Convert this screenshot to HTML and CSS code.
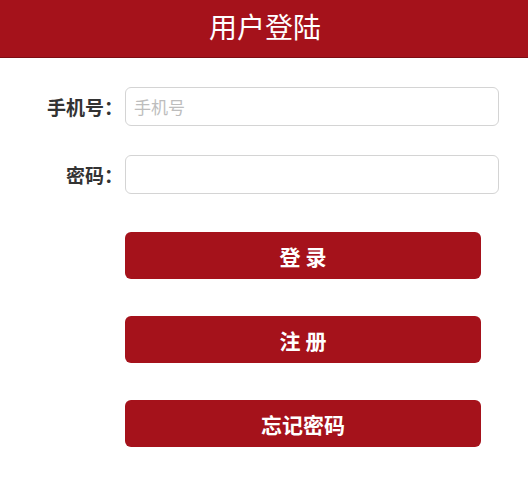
FILE: index.html
```html
<!DOCTYPE html>
<html lang="zh">
<head>
    <meta charset="UTF-8">
    <meta name="viewport" content="width=device-width, initial-scale=1.0">
    <title>用户登陆</title>
    <link rel="stylesheet" href="styles.css">
</head>
<body>
    <div class="header">用户登陆</div>
    <div class="container">
        <div class="form-row">
            <label for="phone" class="form-label">手机号：</label>
            <input type="text" class="form-control" id="phone" placeholder="手机号">
        </div>
        <div class="form-row">
            <label for="password" class="form-label">密码：</label>
            <input type="password" class="form-control" id="password">
        </div>
        <div class="btn-list">
            <button class="btn">登 录</button>
            <button class="btn">注 册</button>
            <button class="btn">忘记密码</button>
        </div>
    </div>
</body>
</html>
```

FILE: styles.css
```css
body {
    font-family: "Noto Sans CJK SC", "Noto Sans", sans-serif;
    background-color: #fff;
    margin: 0;
    padding: 0;
}
.header {
    height: 57px;
    line-height: 53px;
    background-color: #a5121b;
    border-bottom: 1px solid #7d0d14;
    color: #fff;
    font-size: 28px;
    font-weight: 400;
    text-align: center;
    padding-left: 2px;
}
.container {
    padding-top: 29px;
}
.form-row {
    display: grid;
    grid-template-columns: 123px 374px;
    column-gap: 2px;
    align-items: center;
    margin-bottom: 29px;
}
.form-label {
    text-align: right;
    font-size: 19px;
    font-weight: bold;
    color: #333;
}
.form-control {
    box-sizing: border-box;
    width: 374px;
    height: 39px;
    padding: 0 8px;
    border: 1px solid #d4d4d4;
    border-radius: 6px;
    font-family: inherit;
    font-size: 17px;
    color: #333;
    outline: none;
}
.form-control::placeholder {
    color: #bdbdbd;
}
.btn-list {
    display: flex;
    flex-direction: column;
    gap: 37px;
    padding-left: 125px;
    padding-top: 9px;
}
.btn {
    width: 356px;
    height: 47px;
    border: none;
    border-radius: 6px;
    background-color: #a5121b;
    color: #fff;
    font-family: inherit;
    font-size: 21px;
    font-weight: bold;
    cursor: pointer;
}
```
